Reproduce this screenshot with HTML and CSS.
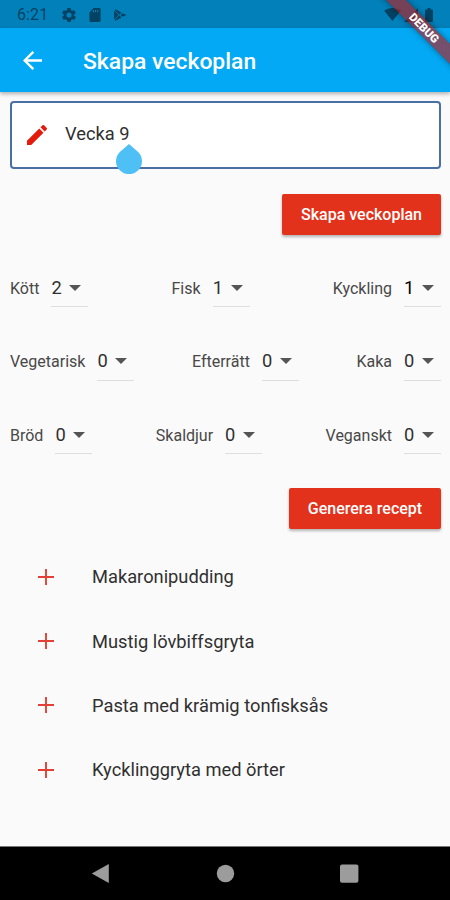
FILE: index.html
```html
<!DOCTYPE html>
<html lang="sv">
<head>
<meta charset="utf-8">
<title>Skapa veckoplan</title>
<link rel="stylesheet" href="styles.css">
</head>
<body>
<div class="phone">
  <div class="status">
    <span class="clock">6:21</span>
    <svg class="gear" viewBox="2 2 20 20"><path fill-rule="evenodd" d="M19.4 13a7.500 7.500 0 0 0 0-2l2.100-1.600a.5.5 0 0 0 .1-.6l-2-3.500a.5.5 0 0 0-.6-.2l-2.500 1a7.300 7.300 0 0 0-1.700-1L14.400 2.400A.5.5 0 0 0 14 2h-4a.5.5 0 0 0-.5.400L9.100 5.100a7.300 7.300 0 0 0-1.700 1l-2.500-1a.5.5 0 0 0-.6.2l-2 3.500a.5.5 0 0 0 .1.600L4.500 11a7.500 7.500 0 0 0 0 2l-2.100 1.600a.5.5 0 0 0-.1.600l2 3.500c.1.200.4.300.6.200l2.500-1a7.300 7.300 0 0 0 1.700 1l.4 2.700c0 .2.2.4.5.4h4c.3 0 .5-.2.5-.4l.4-2.700a7.300 7.300 0 0 0 1.700-1l2.500 1c.2.1.5 0 .6-.2l2-3.500a.5.5 0 0 0-.1-.6zM12 8.300a3.700 3.700 0 1 1 0 7.400 3.700 3.700 0 0 1 0-7.400z"/></svg>
    <svg class="sd" viewBox="4 2 16 20"><path fill-rule="evenodd" d="M18 2h-8L4 8v12a2 2 0 0 0 2 2h12a2 2 0 0 0 2-2V4a2 2 0 0 0-2-2zM9 5h1.500v3H9zM12 5h1.500v3H12zM15 5h1.500v3H15z"/></svg>
    <svg class="play" viewBox="0 0 14 13"><path d="M1 0l7 3.800-2.300 2.400L1 1.500zM0 1.500L4.800 6.500 0 11.500zM1 13l7-3.800-2.300-2.400L1 11.500zM9 4.500L13.500 6.500 9 8.500 7 6.500z"/></svg>
    <span class="spacer"></span>
    <svg class="wifi" viewBox="0 0 18 14"><path d="M9 14L0 3C5-1 13-1 18 3z"/></svg>
    <svg class="signal" viewBox="0 0 14 14"><path d="M0 14L14 0V14z"/></svg>
    <svg class="battery" viewBox="0 0 8 14"><path d="M2.500 0h3v1.500H7a1 1 0 0 1 1 1V13a1 1 0 0 1-1 1H1a1 1 0 0 1-1-1V2.500a1 1 0 0 1 1-1h1.500z"/></svg>
  </div>
  <header class="appbar">
    <svg class="back" viewBox="4 4 16 16"><path d="M20 11H7.830l5.590-5.590L12 4l-8 8 8 8 1.410-1.410L7.830 13H20z"/></svg>
    <h1>Skapa veckoplan</h1>
  </header>
  <div class="banner"><span>DEBUG</span></div>
  <main>
    <div class="field">
      <svg class="pencil" viewBox="3 3 18 18"><path d="M3 17.250V21h3.750L17.810 9.940l-3.750-3.750zM20.710 7.040a1 1 0 0 0 0-1.410l-2.340-2.340a1 1 0 0 0-1.410 0l-1.830 1.830 3.750 3.750z"/></svg>
      <span class="entry">Vecka 9<svg class="handle" viewBox="0 0 26 30"><path d="M13 0L21.900 7.700A13 13 0 1 1 4.100 7.700z"/></svg></span>
    </div>
    <button class="btn create">Skapa veckoplan</button>
    <div class="pickers">
      <div class="row">
        <div class="pick"><label>Kött</label><span class="select">2</span></div>
        <div class="pick"><label>Fisk</label><span class="select">1</span></div>
        <div class="pick"><label>Kyckling</label><span class="select strong">1</span></div>
      </div>
      <div class="row">
        <div class="pick"><label>Vegetarisk</label><span class="select">0</span></div>
        <div class="pick"><label>Efterrätt</label><span class="select">0</span></div>
        <div class="pick"><label>Kaka</label><span class="select">0</span></div>
      </div>
      <div class="row">
        <div class="pick"><label>Bröd</label><span class="select">0</span></div>
        <div class="pick"><label>Skaldjur</label><span class="select">0</span></div>
        <div class="pick"><label>Veganskt</label><span class="select">0</span></div>
      </div>
    </div>
    <button class="btn generate">Generera recept</button>
    <ul class="recipes">
      <li><svg class="plus" viewBox="0 0 16 16"><path d="M0 8H16M8 0V16"/></svg><span>Makaronipudding</span></li>
      <li><svg class="plus" viewBox="0 0 16 16"><path d="M0 8H16M8 0V16"/></svg><span>Mustig lövbiffsgryta</span></li>
      <li><svg class="plus" viewBox="0 0 16 16"><path d="M0 8H16M8 0V16"/></svg><span>Pasta med krämig tonfisksås</span></li>
      <li><svg class="plus" viewBox="0 0 16 16"><path d="M0 8H16M8 0V16"/></svg><span>Kycklinggryta med örter</span></li>
    </ul>
  </main>
  <nav class="nav">
    <svg viewBox="0 0 20 20"><path d="M.8 9.500L17.800 0V19z"/></svg>
    <svg viewBox="0 0 20 20"><circle cx="10.500" cy="9.500" r="8.700"/></svg>
    <svg viewBox="0 0 20 20"><rect x="1" y=".4" width="18.400" height="18.400" rx="2"/></svg>
  </nav>
</div>
</body>
</html>
```
FILE: styles.css
```css
* { box-sizing: border-box; }
body { margin: 0; font-family: Roboto, sans-serif; color: #303030; }
svg { display: block; flex: none; }
.phone {
  position: relative;
  width: 450px;
  height: 900px;
  overflow: hidden;
  background: #fafafa;
  display: flex;
  flex-direction: column;
}
.status {
  height: 28px;
  flex: none;
  background: #0280ba;
  display: flex;
  align-items: center;
  padding: 1px 16px 0 17px;
  color: #024263;
  fill: #024263;
}
.clock { width: 45px; font-size: 16px; letter-spacing: .1px; }
.gear { width: 14px; height: 14px; }
.sd { width: 12px; height: 14px; margin-left: 13px; }
.play { width: 13px; height: 12px; margin-left: 13px; }
.spacer { flex: 1; }
.wifi { width: 17px; height: 13px; }
.signal { width: 14px; height: 14px; margin-left: 3px; }
.battery { width: 8px; height: 14px; margin: 0 1px 0 7px; }
.appbar {
  height: 64px;
  flex: none;
  background: #03a9f4;
  box-shadow: 0 2px 4px rgba(0, 0, 0, .3);
  display: flex;
  align-items: center;
  padding: 0 23px;
  color: #fff;
}
.back { width: 19px; height: 19px; margin-top: 1px; fill: #fff; }
.appbar h1 { margin: 2px 0 0 41px; font-size: 22.900px; font-weight: 500; }
.banner {
  position: absolute;
  left: 364px;
  top: 20.500px;
  width: 120px;
  height: 14px;
  transform: rotate(45deg);
  background: rgba(183, 28, 28, .63);
  box-shadow: 0 0 6px rgba(0, 0, 0, .4);
  color: #fff;
  font-size: 11.500px;
  line-height: 14px;
  font-weight: 900;
  text-align: center;
}
main { flex: 1; display: flex; flex-direction: column; padding: 9px 9px 0 10px; }
.field {
  height: 68px;
  border: 2px solid #496fa5;
  border-radius: 4px;
  background: #fff;
  display: flex;
  align-items: center;
  padding: 0 15px 4px;
}
.pencil { width: 20px; height: 20px; margin-top: 4px; fill: #e21b0c; }
.entry { position: relative; margin-left: 18px; font-size: 18.300px; }
.handle { position: absolute; right: -12px; top: 21px; width: 26px; height: 30px; fill: #4fc0f5; }
.btn {
  align-self: flex-end;
  height: 41px;
  border: 0;
  padding: 0;
  border-radius: 2px;
  background: #e3321b;
  box-shadow: 0 2px 3px rgba(0, 0, 0, .28);
  color: #fff;
  font: 500 16px Roboto, sans-serif;
}
.create { width: 159px; margin-top: 25px; }
.generate { width: 152px; margin-top: 34px; }
.pickers { margin-top: 35px; display: flex; flex-direction: column; gap: 36px; }
.row { height: 37.300px; display: flex; justify-content: space-between; align-items: stretch; }
.pick { display: flex; gap: 12px; line-height: 38px; }
.pick label { font-size: 16px; color: #484848; }
.select {
  width: 37px;
  display: flex;
  align-items: center;
  justify-content: space-between;
  padding-right: 7px;
  font-size: 18.300px;
  border-bottom: 1px solid #dedede;
}
.select::after {
  content: "";
  border: 6px solid transparent;
  border-top-color: #555;
  border-bottom: 0;
}
.strong { color: #000; }
.recipes { list-style: none; margin: 16px 0 0; padding: 0; }
.recipes li { height: 64.200px; display: flex; align-items: center; padding-left: 28px; font-size: 18.300px; }
.recipes span { margin-left: 38px; }
.plus { width: 16px; height: 16px; stroke: #e34035; stroke-width: 1.900; fill: none; }
.nav {
  height: 54px;
  flex: none;
  background: #000;
  border-top: 1px solid #777;
  display: flex;
  justify-content: space-between;
  align-items: center;
  padding: 0 91px;
  fill: #9c9c9c;
}
.nav svg { width: 20px; height: 20px; }
```
